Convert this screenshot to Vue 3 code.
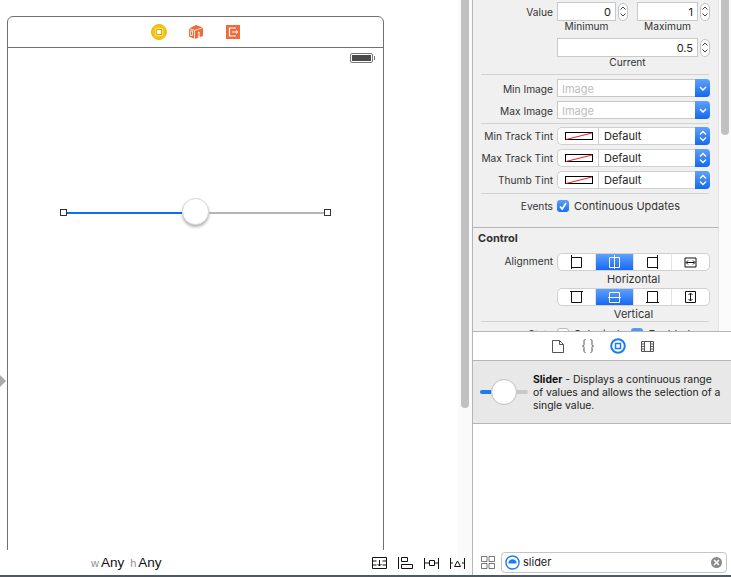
<template>
  <div class="window">
    <div class="main">
      <!-- canvas -->
      <div class="left">
        <div class="canvas">
          <span class="arrow"></span>
          <div class="scene">
            <div class="scene-head">
              <svg width="16" height="16" viewBox="0 0 16 16">
                <circle cx="8" cy="8" r="7.500" fill="#f7c511" stroke="#eeb40e" />
                <rect x="4" y="4" width="8" height="8" fill="#fde27a" />
                <rect x="5.500" y="5.500" width="5" height="5" fill="#fff" stroke="#dfa50a" />
              </svg>
              <svg width="14" height="14" viewBox="0 0 14 14">
                <path d="M0 3.500 7 0l7 2.500v8.500L6 14l-6-2.500z" fill="#ef6b3c" />
                <path d="M0 3.500 5.500 5.500V14M5.500 5.500 14 2.500" fill="none" stroke="#fff" stroke-width="0.800" />
                <rect x="1.500" y="6" width="2" height="4.500" fill="none" stroke="#fff" stroke-width="0.800" />
                <path d="M8.800 7.500 10 7v5M8.800 12h2.400" fill="none" stroke="#fff" stroke-width="1" />
              </svg>
              <svg class="exit" width="14" height="14" viewBox="0 0 14 14">
                <rect width="14" height="14" fill="#ef6b3c" />
                <path d="M9 4V3H3.500v8H9v-1" fill="none" stroke="#fff" stroke-width="1.200" />
                <path d="M6 7h5.500M10 5.500 11.800 7 10 8.500" fill="none" stroke="#fff" stroke-width="1" />
              </svg>
            </div>
            <div class="status">
              <span class="battery"><i></i></span>
            </div>
            <div class="slider">
              <span class="handle"></span>
              <span class="track blue"></span>
              <span class="thumb"></span>
              <span class="track grey"></span>
              <span class="handle"></span>
            </div>
          </div>
        </div>
        <div class="bottom-bar">
          <div class="size-class">
            <span class="dim">w</span>Any<span class="dim dim-h">h</span>Any
          </div>
          <div class="bar-icons">
            <svg width="15" height="12" viewBox="0 0 15 12">
              <path d="M.5.500h14v11H.5zM.5 4h4M.5 8h4M10.500 4h4M10.500 8h4M7.500 3V9M5.500 7l2 2 2-2" fill="none" stroke="#111" />
            </svg>
            <svg width="15" height="12" viewBox="0 0 15 12">
              <path d="M.5 0v12M3.500.5h6v4h-6zM3.500 7.500h11v4h-11z" fill="none" stroke="#111" />
            </svg>
            <svg width="15" height="12" viewBox="0 0 15 12">
              <path d="M.5 1v11M14.500 1v11M.5 6H5M10.500 6h4M5.500 3.500h5v5h-5z" fill="none" stroke="#111" />
            </svg>
            <svg width="15" height="12" viewBox="0 0 15 12">
              <path d="M.5 1v11M14.500 1v11M.5 6H3M12 6h2.500M4.500 9.500h6L7.500 4z" fill="none" stroke="#111" />
            </svg>
          </div>
        </div>
      </div>

      <!-- middle scrollbar -->
      <div class="gutter"><span class="bar"></span></div>

      <!-- inspector -->
      <div class="inspector">
        <div class="attrs">
          <div class="attrs-body">
            <div class="row pair">
              <label class="lbl">Value</label>
              <div class="stepped">
                <div class="num small">0</div><Stepper />
              </div>
              <div class="stepped">
                <div class="num small">1</div><Stepper />
              </div>
            </div>
            <div class="captions">
              <span class="cap-a">Minimum</span>
              <span class="cap-b">Maximum</span>
            </div>
            <div class="row current">
              <label class="lbl"></label>
              <div class="stepped">
                <div class="num wide">0.5</div><Stepper />
              </div>
            </div>
            <div class="current-cap">Current</div>
            <hr class="sep sep-a" />

            <div v-for="name in imageRows" :key="name" class="row image-row">
              <label class="lbl">{{ name }}</label>
              <div class="combo">
                <span class="placeholder">Image</span>
                <span class="combo-btn">
                  <svg width="8" height="5" viewBox="0 0 8 5"><path d="M1 1l3 3 3-3" fill="none" stroke="#fff" stroke-width="1.500" /></svg>
                </span>
              </div>
            </div>
            <hr class="sep sep-b" />

            <div v-for="name in tintRows" :key="name" class="row tint-row">
              <label class="lbl">{{ name }}</label>
              <div class="popup">
                <span class="swatch-cell">
                  <svg width="29" height="9" viewBox="0 0 29 9">
                    <rect x="0.500" y="0.500" width="27" height="7" fill="#fff" stroke="#000" />
                    <path d="M1 7.500 27 1" stroke="#f01c1c" fill="none" />
                  </svg>
                </span>
                <span class="popup-text">Default</span>
                <span class="popup-btn">
                  <svg width="8" height="12" viewBox="0 0 8 12"><path d="M1 4.500 4 1.500l3 3M1 7.500l3 3 3-3" fill="none" stroke="#fff" stroke-width="1.300" /></svg>
                </span>
              </div>
            </div>
            <hr class="sep sep-c" />

            <div class="row events-row">
              <label class="lbl">Events</label>
              <span class="check on">
                <svg width="10" height="10" viewBox="0 0 10 10"><path d="M2 5.500 4.200 8 8 2" fill="none" stroke="#fff" stroke-width="1.700" /></svg>
              </span>
              <span class="check-text">Continuous Updates</span>
            </div>

            <div class="section">
              <h4>Control</h4>
              <div class="row seg-row">
                <label class="lbl align-lbl">Alignment</label>
                <div class="segs">
                  <span v-for="(s, i) in horizontal" :key="i" class="seg" :class="{ active: i === 1 }">
                    <svg width="13" height="14" viewBox="0 0 13 14"><path :d="s" fill="none" :stroke="i === 1 ? '#fff' : '#111'" /></svg>
                  </span>
                </div>
              </div>
              <div class="caption-seg">Horizontal</div>
              <div class="row seg-row next">
                <label class="lbl"></label>
                <div class="segs">
                  <span v-for="(s, i) in vertical" :key="i" class="seg" :class="{ active: i === 1 }">
                    <svg width="13" height="14" viewBox="0 0 13 14"><path :d="s" fill="none" :stroke="i === 1 ? '#fff' : '#111'" /></svg>
                  </span>
                </div>
              </div>
              <div class="caption-seg vert">Vertical</div>
              <hr class="sep sep-d" />
              <div class="row state-row">
                <label class="lbl">State</label>
                <span class="check"></span>
                <span class="check-text">Selected</span>
                <span class="check on gap"></span>
                <span class="check-text">Enabled</span>
              </div>
            </div>
          </div>
          <div class="right-rail"><span class="rail-bar"></span></div>
        </div>

        <div class="tabs">
          <span class="tab"><svg width="12" height="13" viewBox="0 0 12 13"><path d="M.5.5h7l4 4v8H.5zM7.500.5v4h4" fill="none" stroke="#555" /></svg></span>
          <span class="tab"><svg width="12" height="14" viewBox="0 0 12 14"><path d="M3.500.5C2 .5 2 1.500 2 3v2.500C2 6.500 1.500 7 .5 7c1 0 1.500.5 1.500 1.500V11c0 1.500 0 2.500 1.500 2.500M8.500.5C10 .5 10 1.500 10 3v2.500c0 1 .5 1.500 1.500 1.500-1 0-1.500.5-1.500 1.500V11c0 1.500 0 2.500-1.500 2.500" fill="none" stroke="#555" /></svg></span>
          <span class="tab"><svg width="16" height="16" viewBox="0 0 16 16"><circle cx="8" cy="8" r="6.800" fill="none" stroke="#1b7cf0" stroke-width="2" /><rect x="5.500" y="5.500" width="5" height="5" fill="none" stroke="#1b7cf0" stroke-width="1.500" /></svg></span>
          <span class="tab"><svg width="13" height="11" viewBox="0 0 13 11"><path d="M.5.5h12v10H.5zM3.500.5v10M9.500.5v10M.5 3h3M.5 5.500h3M.5 8h3M9.500 3h3M9.500 5.500h3M9.500 8h3" fill="none" stroke="#555" /></svg></span>
        </div>

        <div class="item">
          <div class="item-slider">
            <span class="mini blue"></span>
            <span class="mini-thumb"></span>
            <span class="mini grey"></span>
          </div>
          <p><b>Slider</b> - Displays a continuous range of values and allows the selection of a single value.</p>
        </div>

        <div class="list"></div>

        <div class="search-bar">
          <svg width="14" height="13" viewBox="0 0 14 13"><path d="M.5.5h5.500v5H.5zM8 .5h5.500v5H8zM.5 7.500h5.500v5H.5zM8 7.500h5.500v5H8z" fill="none" stroke="#777" /></svg>
          <div class="search">
            <svg width="15" height="15" viewBox="0 0 16 16"><circle cx="8" cy="8" r="7" fill="#fff" stroke="#1b7cf0" stroke-width="1.500" /><path d="M3.500 9a4.500 4.500 0 0 1 9 0z" fill="#1b7cf0" /></svg>
            <span class="query">slider</span>
            <span class="clear">
              <svg width="7" height="7" viewBox="0 0 7 7"><path d="M1 1l5 5M6 1 1 6" stroke="#fff" stroke-width="1.500" /></svg>
            </span>
          </div>
        </div>
      </div>
    </div>
    <div class="desktop"></div>
  </div>
</template>

<script setup>
  import { h } from 'vue'

  // little up/down arrows next to number fields
  const Stepper = () =>
    h('span', { class: 'stepper', style: { display: 'flex', flexDirection: 'column', alignItems: 'center', justifyContent: 'center', gap: '3px', width: '10px', height: '18px', marginLeft: '2px', border: '1px solid #c4c4c4', borderRadius: '5px', background: '#fff', boxSizing: 'border-box' } }, [
      h('svg', { width: 6, height: 4, viewBox: '0 0 6 4' }, [h('path', { d: 'M.5 3.500 3 1l2.500 2.500', fill: 'none', stroke: '#444' })]),
      h('svg', { width: 6, height: 4, viewBox: '0 0 6 4' }, [h('path', { d: 'M.5.5 3 3 5.500.5', fill: 'none', stroke: '#444' })])
    ])

  const imageRows = ['Min Image', 'Max Image']
  const tintRows = ['Min Track Tint', 'Max Track Tint', 'Thumb Tint']

  const horizontal = [
    'M1.500 0v14M1.500 2.500h10v10h-10',
    'M6.500 0v14M1.500 2.500h10v10h-10z',
    'M11.500 0v14M11.500 2.500h-10v10h10',
    'M1 3h11v9H1zM2.500 7.500h8M4 5.500l-2 2 2 2M9 5.500l2 2-2 2'
  ]
  const vertical = [
    'M0 1.500h13M1.500 1.500v11h10v-11',
    'M0 7.500h13M1.500 2.500h10v10h-10z',
    'M0 12.500h13M1.500 12.500v-11h10v11',
    'M1.500 1.500h10v11h-10zM6.500 3.500v7M4.500 5l2-2 2 2M4.500 9l2 2 2-2'
  ]
</script>

<style scoped>
  .window {
    width: 731px;
    height: 577px;
    overflow: hidden;
    background: #fff;
    display: flex;
    flex-direction: column;
    font-family: "Inter", "Liberation Sans", sans-serif;
    font-size: 11px;
    color: #333;
  }

  .main {
    flex: 1;
    min-height: 0;
    display: flex;
  }

  .desktop {
    height: 2px;
    background: #4d5a63;
  }

  /* canvas */
  .left {
    width: 458px;
    display: flex;
    flex-direction: column;
  }

  .canvas {
    position: relative;
    height: 550px;
    overflow: hidden;
    padding: 16px 0 0 7px;
    box-sizing: border-box;
  }

  .arrow {
    position: absolute;
    left: 0;
    top: 375px;
    border-left: 6px solid #aaa;
    border-top: 6px solid transparent;
    border-bottom: 6px solid transparent;
  }

  .scene {
    position: relative;
    width: 377px;
    height: 560px;
    box-sizing: border-box;
    border: 1px solid #707070;
    border-radius: 6px 6px 0 0;
  }

  .scene-head {
    height: 31px;
    box-sizing: border-box;
    border-bottom: 1px solid #707070;
    display: flex;
    align-items: center;
    justify-content: center;
    gap: 22px;
  }

  .exit {
    margin-left: 1px;
  }

  .status {
    display: flex;
    justify-content: flex-end;
    padding: 5px 10px 0 0;
  }

  .battery {
    position: relative;
    width: 23px;
    height: 10px;
    border: 1px solid #777;
    border-radius: 2px;
    padding: 1px;
    box-sizing: border-box;
    display: flex;
  }

  .battery i {
    flex: 1;
    background: #4a4a4a;
  }

  .battery::after {
    content: "";
    position: absolute;
    right: -3px;
    top: 2px;
    width: 1px;
    height: 4px;
    background: #777;
  }

  .slider {
    position: absolute;
    left: 52px;
    top: 181px;
    width: 271px;
    height: 27px;
    display: flex;
    align-items: center;
  }

  .handle {
    width: 7px;
    height: 7px;
    margin-top: 2px;
    box-sizing: border-box;
    border: 1px solid #333;
    background: #fff;
  }

  .track {
    width: 115px;
    height: 2px;
    margin-top: 2px;
  }

  .track.blue {
    background: #0a6ff0;
  }

  .track.grey {
    background: #b5b5b5;
  }

  .thumb {
    width: 27px;
    height: 27px;
    box-sizing: border-box;
    border-radius: 50%;
    background: #fff;
    border: 1px solid #d8d8d8;
    box-shadow: 0 2px 3px rgba(0, 0, 0, 0.3);
  }

  .bottom-bar {
    flex: 1;
    position: relative;
    display: flex;
    align-items: center;
    justify-content: flex-end;
  }

  .size-class {
    position: absolute;
    left: 91px;
    top: 5px;
    font-family: "Liberation Sans", sans-serif;
    font-size: 13.500px;
    color: #111;
  }

  .dim {
    font-size: 11px;
    margin-right: 2px;
    color: #8f8f8f;
  }

  .dim-h {
    margin-left: 6px;
  }

  .bar-icons {
    display: flex;
    gap: 11px;
    padding-top: 1px;
    margin-right: -7px;
  }

  /* middle scrollbar */
  .gutter {
    width: 15px;
    flex: none;
    box-sizing: border-box;
    border-right: 1px solid #b5b5b5;
    background: #fafafa;
    padding-left: 3px;
  }

  .bar {
    display: block;
    width: 8px;
    height: 408px;
    border-radius: 0 0 4px 4px;
    background: #c1c1c1;
  }

  /* inspector */
  .inspector {
    flex: 1;
    min-width: 0;
    display: flex;
    flex-direction: column;
  }

  .attrs {
    height: 332px;
    flex: none;
    box-sizing: border-box;
    border-bottom: 1px solid #b5b5b5;
    overflow: hidden;
    display: flex;
  }

  .attrs-body {
    width: 246px;
    flex: none;
    background: #f0f0f0;
    border-right: 1px solid #e2e2e2;
    padding-top: 2px;
    box-sizing: border-box;
  }

  .right-rail {
    flex: 1;
    padding-left: 2px;
    background: #fbfbfb;
  }

  .rail-bar {
    display: block;
    width: 8px;
    height: 135px;
    border-radius: 0 0 4px 4px;
    background: #c1c1c1;
  }

  .row {
    display: flex;
    align-items: center;
  }

  .lbl {
    width: 80px;
    margin-right: 4px;
    flex: none;
    text-align: right;
    white-space: nowrap;
    font-size: 10.200px;
    color: #333;
  }

  .image-row .lbl {
    padding-top: 2px;
  }

  .align-lbl {
    padding-bottom: 2px;
  }

  .stepped {
    display: flex;
    align-items: center;
  }

  .pair .stepped + .stepped {
    margin-left: 9px;
  }

  .num {
    height: 19px;
    box-sizing: border-box;
    border: 1px solid #c8c8c8;
    background: #fff;
    text-align: right;
    padding-right: 4px;
    line-height: 18px;
    font-size: 11px;
    color: #222;
  }

  .num.small {
    width: 59px;
  }

  .pair .stepped + .stepped .num.small {
    width: 61px;
  }

  .num.wide {
    width: 141px;
  }

  .captions {
    display: flex;
    height: 17px;
    line-height: 11px;
    padding-left: 84px;
    font-size: 10.200px;
  }

  .cap-a {
    width: 59px;
    text-align: center;
  }

  .cap-b {
    width: 61px;
    margin-left: 21px;
    text-align: center;
  }

  .current-cap {
    margin-left: 84px;
    width: 141px;
    text-align: center;
    height: 17px;
    line-height: 11px;
    font-size: 10.200px;
  }

  .sep {
    border: 0;
    height: 1px;
    background: #d2d2d2;
    margin: 0 0 0 8px;
    width: 228px;
  }

  .sep-a {
    margin-bottom: 4px;
  }

  .sep-b {
    margin-bottom: 3px;
  }

  .sep-c {
    margin-top: 1px;
  }

  .image-row,
  .tint-row {
    height: 18px;
    margin-bottom: 4px;
  }

  .combo {
    width: 153px;
    height: 18px;
    box-sizing: border-box;
    display: flex;
    border: 1px solid #c8c8c8;
    border-right: 0;
    border-radius: 0 4px 4px 0;
    background: #fff;
  }

  .placeholder {
    flex: 1;
    padding-left: 4px;
    line-height: 18px;
    color: #bdbdbd;
  }

  .combo-btn,
  .popup-btn {
    width: 15px;
    margin: -1px 0;
    display: flex;
    align-items: center;
    justify-content: center;
    border-radius: 0 4px 4px 0;
    background: linear-gradient(#5fa0fb, #1569ef);
  }

  .popup {
    width: 153px;
    height: 18px;
    box-sizing: border-box;
    display: flex;
    align-items: stretch;
    border: 1px solid #d0d0d0;
    border-right: 0;
    border-radius: 5px;
    background: #fff;
  }

  .swatch-cell {
    width: 41px;
    box-sizing: border-box;
    border-right: 1px solid #cfcfcf;
    display: flex;
    align-items: center;
    justify-content: center;
    padding-left: 2px;
  }

  .popup-text {
    flex: 1;
    padding-left: 5px;
    line-height: 16px;
    color: #222;
  }

  .events-row {
    height: 19px;
    margin-top: 2px;
  }

  .check {
    width: 12px;
    height: 12px;
    box-sizing: border-box;
    border: 1px solid #bbb;
    border-radius: 3px;
    background: #fff;
    display: flex;
    align-items: center;
    justify-content: center;
    margin-right: 5px;
    flex: none;
  }

  .check.on {
    border: 0;
    background: linear-gradient(#5b9dfa, #1b6ff0);
  }

  .check.gap {
    margin-left: 12px;
  }

  .check-text {
    color: #333;
    white-space: nowrap;
  }

  .section {
    margin-top: 12px;
    border-top: 1px solid #b5b5b5;
    padding-top: 3px;
  }

  .section h4 {
    margin: 0 0 0 5px;
    font-size: 11px;
    line-height: 14px;
    font-weight: 700;
    color: #333;
  }

  .seg-row {
    margin-top: 8px;
    align-items: center;
  }

  .seg-row.next {
    margin-top: 1px;
  }

  .segs {
    width: 153px;
    height: 18px;
    display: flex;
    box-sizing: border-box;
    border: 1px solid #d0d0d0;
    border-radius: 5px;
    background: #fff;
    overflow: hidden;
  }

  .seg {
    flex: 1;
    display: flex;
    align-items: center;
    justify-content: center;
    border-right: 1px solid #e3e3e3;
  }

  .seg:last-child {
    border-right: 0;
  }

  .seg.active {
    background: linear-gradient(#63a4fb, #1266f0);
    margin: -1px 0;
  }

  .caption-seg {
    margin-left: 84px;
    width: 153px;
    height: 16px;
    line-height: 16px;
    text-align: center;
    color: #333;
  }

  .caption-seg.vert {
    height: 15px;
  }

  .state-row {
    margin-top: 5px;
  }

  .tabs {
    height: 28px;
    flex: none;
    display: flex;
    align-items: center;
    justify-content: center;
    padding-left: 1px;
  }

  .tab {
    width: 30px;
    display: flex;
    justify-content: center;
  }

  .item {
    height: 64px;
    flex: none;
    box-sizing: border-box;
    background: #e8e8e8;
    border-top: 1px solid #b5b5b5;
    border-bottom: 1px solid #b5b5b5;
    display: flex;
    align-items: center;
    padding-left: 7px;
  }

  .item-slider {
    display: flex;
    align-items: center;
    margin-right: 5px;
  }

  .mini {
    width: 11px;
    height: 4px;
  }

  .mini.blue {
    background: #1b7cf0;
    border-radius: 2px 0 0 2px;
  }

  .mini.grey {
    background: #c8c8c8;
    border-radius: 0 2px 2px 0;
  }

  .mini-thumb {
    width: 26px;
    height: 26px;
    box-sizing: border-box;
    border-radius: 50%;
    background: #fff;
    border: 1px solid #bdbdbd;
  }

  .item p {
    margin: 0;
    width: 188px;
    line-height: 13px;
    font-size: 10.400px;
    color: #222;
  }

  .item b {
    color: #111;
  }

  .list {
    flex: 1;
    background: #fff;
  }

  .search-bar {
    height: 26px;
    flex: none;
    display: flex;
    align-items: center;
    padding-left: 8px;
    box-sizing: border-box;
  }

  .search {
    margin-left: 6px;
    width: 226px;
    height: 21px;
    box-sizing: border-box;
    border: 1px solid #c4c4c4;
    border-radius: 4px;
    display: flex;
    align-items: center;
    padding: 0 4px 0 3px;
    background: #fff;
  }

  .query {
    flex: 1;
    margin-left: 3px;
    color: #222;
  }

  .clear {
    width: 11px;
    height: 11px;
    border-radius: 50%;
    background: #8a8a8a;
    display: flex;
    align-items: center;
    justify-content: center;
  }
</style>
